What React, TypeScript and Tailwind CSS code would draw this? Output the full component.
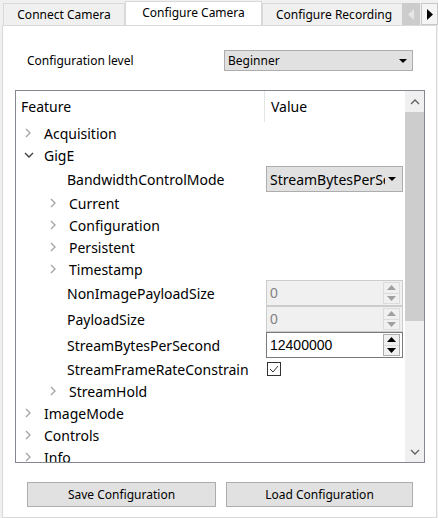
import type { ReactNode } from "react";

const font = "font-['Noto_Sans',sans-serif]";

function Chevron({ open = false }: { open?: boolean }) {
  if (open) {
    return (
      <svg width="10" height="7" viewBox="0 0 10 7" className="shrink-0">
        <polyline points="1,1 5,5 9,1" fill="none" stroke="#404040" strokeWidth="1.4" />
      </svg>
    );
  }
  return (
    <svg width="7" height="10" viewBox="0 0 7 10" className="shrink-0">
      <polyline points="1,1 5,5 1,9" fill="none" stroke="#a6a6a6" strokeWidth="1.4" />
    </svg>
  );
}

function DropArrow() {
  return (
    <svg width="8" height="4" viewBox="0 0 8 4" className="shrink-0">
      <polygon points="0,0 8,0 4,4" fill="#000" />
    </svg>
  );
}

function SpinBox({ value, disabled = false }: { value: string; disabled?: boolean }) {
  const arrow = disabled ? "#a0a0a0" : "#000";
  return (
    <div
      className={`flex h-[26px] w-[137px] items-center border pl-[3px] pr-[2px] ${
        disabled ? "border-[#cccccc] bg-[#f0f0f0] text-[#838383]" : "border-[#7a7a7a] bg-white text-black"
      }`}
    >
      <span className="flex-1 font-['Liberation_Sans',sans-serif] text-[14px]">{value}</span>
      <div
        className={`flex h-[22px] w-[17px] flex-col border ${
          disabled ? "border-[#dcdcdc]" : "border-[#adadad] bg-[#f0f0f0]"
        }`}
      >
        <div className="flex flex-1 items-center justify-center border-b border-[#dcdcdc]">
          <svg width="9" height="5" viewBox="0 0 9 5">
            <polygon points="0,5 9,5 4.5,0" fill={arrow} />
          </svg>
        </div>
        <div className="flex flex-1 items-center justify-center">
          <svg width="9" height="5" viewBox="0 0 9 5">
            <polygon points="0,0 9,0 4.5,5" fill={arrow} />
          </svg>
        </div>
      </div>
    </div>
  );
}

type Row = {
  label: string;
  level: 0 | 1;
  kind: "branch" | "open" | "leaf";
  tall?: boolean;
  value?: ReactNode;
};

const rows: Row[] = [
  { label: "Acquisition", level: 0, kind: "branch" },
  { label: "GigE", level: 0, kind: "open" },
  {
    label: "BandwidthControlMode",
    level: 1,
    kind: "leaf",
    tall: true,
    value: (
      <div className="flex h-[26px] w-[137px] items-center overflow-hidden border border-[#adadad] bg-[#e1e1e1] pl-[3px] pr-[6px]">
        <span className="flex-1 overflow-hidden whitespace-nowrap">StreamBytesPerSecond</span>
        <span className="ml-[3px]">
          <DropArrow />
        </span>
      </div>
    ),
  },
  { label: "Current", level: 1, kind: "branch" },
  { label: "Configuration", level: 1, kind: "branch" },
  { label: "Persistent", level: 1, kind: "branch" },
  { label: "Timestamp", level: 1, kind: "branch" },
  { label: "NonImagePayloadSize", level: 1, kind: "leaf", tall: true, value: <SpinBox value="0" disabled /> },
  { label: "PayloadSize", level: 1, kind: "leaf", tall: true, value: <SpinBox value="0" disabled /> },
  { label: "StreamBytesPerSecond", level: 1, kind: "leaf", tall: true, value: <SpinBox value="12400000" /> },
  {
    label: "StreamFrameRateConstrain",
    level: 1,
    kind: "leaf",
    value: (
      <div className="ml-px flex h-[14px] w-[14px] items-center justify-center border border-[#333333] bg-white">
        <svg width="10" height="8" viewBox="0 0 10 8">
          <polyline points="1,4 4,7 9,1" fill="none" stroke="#333" strokeWidth="1" />
        </svg>
      </div>
    ),
  },
  { label: "StreamHold", level: 1, kind: "branch" },
  { label: "ImageMode", level: 0, kind: "branch" },
  { label: "Controls", level: 0, kind: "branch" },
  { label: "Info", level: 0, kind: "branch" },
];

function TreeRow({ row }: { row: Row }) {
  const chevronPad = row.level === 0 ? "pl-[9px]" : "pl-[34px]";
  return (
    <div className={`flex shrink-0 items-center ${row.tall ? "h-[26px]" : "h-[22px]"}`}>
      <div className="flex w-[249px] shrink-0 items-center whitespace-nowrap">
        {row.kind === "leaf" ? (
          <span className="pl-[51px]">{row.label}</span>
        ) : (
          <div className={`flex items-center ${chevronPad}`}>
            <span className={`flex w-[10px] items-center ${row.kind === "open" ? "-ml-[1px]" : ""}`}>
              <Chevron open={row.kind === "open"} />
            </span>
            <span className={row.kind === "open" ? "pl-[10px]" : "pl-[9px]"}>{row.label}</span>
          </div>
        )}
      </div>
      <div className="flex items-center pl-px">{row.value}</div>
    </div>
  );
}

function ScrollBar() {
  return (
    <div className="flex w-[19px] shrink-0 flex-col bg-[#f0f0f0]">
      <div className="flex h-[21px] items-center justify-center">
        <svg width="10" height="6" viewBox="0 0 10 6">
          <polyline points="1,5 5,1 9,5" fill="none" stroke="#606060" strokeWidth="1.3" />
        </svg>
      </div>
      <div className="h-[209px] bg-[#cdcdcd]" />
      <div className="flex-1" />
      <div className="flex h-[21px] items-center justify-center">
        <svg width="10" height="6" viewBox="0 0 10 6">
          <polyline points="1,1 5,5 9,1" fill="none" stroke="#606060" strokeWidth="1.3" />
        </svg>
      </div>
    </div>
  );
}

export default function App() {
  return (
    <div className={`h-[518px] w-[438px] overflow-hidden bg-[#f0f0f0] text-[14px] text-black ${font}`}>
      <div className="flex h-[25px] items-end text-[12px]">
        <div className="flex flex-1 items-end overflow-hidden pl-[3px]">
          <div className="flex h-[22px] w-[122px] shrink-0 items-center justify-center border border-b-0 border-[#d9d9d9] bg-[#f0f0f0]">
            Connect Camera
          </div>
          <div className="relative z-10 -mb-px flex h-[25px] w-[137px] shrink-0 items-center justify-center border border-b-0 border-[#d9d9d9] bg-white pb-[2px]">
            Configure Camera
          </div>
          <div className="flex h-[22px] w-[150px] shrink-0 items-center border border-b-0 border-[#d9d9d9] bg-[#f0f0f0] pl-[13px] whitespace-nowrap">
            Configure Recording
          </div>
        </div>
        <div className="flex h-[22px] shrink-0">
          <div className="flex w-[18px] items-center justify-center bg-[#cccccc]">
            <svg width="6" height="11" viewBox="0 0 6 11">
              <polygon points="6,0 6,11 0,5.5" fill="#e6e6e6" />
            </svg>
          </div>
          <div className="ml-px flex w-[17px] items-center justify-center border border-[#c8c8c8] bg-[#f4f4f4]">
            <svg width="6" height="11" viewBox="0 0 6 11">
              <polygon points="0,0 0,11 6,5.5" fill="#000" />
            </svg>
          </div>
        </div>
      </div>

      <div className="ml-[2px] flex h-[493px] w-[435px] flex-col border border-[#d9d9d9] bg-white">
        <div className="mt-[24px] flex h-[21px] items-center text-[12px]">
          <span className="w-[221px] pl-[24px]">Configuration level</span>
          <div className="flex h-[21px] w-[189px] items-center border border-[#adadad] bg-[#e1e1e1] pl-[3px] pr-[5px]">
            <span className="flex-1">Beginner</span>
            <DropArrow />
          </div>
        </div>

        <div className="ml-[12px] mt-[19px] flex h-[373px] w-[410px] border border-[#828790] bg-white">
          <div className="flex min-w-0 flex-1 flex-col overflow-hidden">
            <div className="flex h-[31px] shrink-0 items-center">
              <div className="flex h-full w-[249px] items-center border-r border-[#e5e5e5] pl-[5px]">Feature</div>
              <div className="pl-[6px]">Value</div>
            </div>
            {rows.map((row) => (
              <TreeRow key={row.label} row={row} />
            ))}
          </div>
          <ScrollBar />
        </div>

        <div className="mt-[19px] flex gap-[10px] pl-[24px] text-[12px]">
          <button className="flex h-[25px] w-[189px] items-center justify-center border border-[#adadad] bg-[#e1e1e1]">
            Save Configuration
          </button>
          <button className="flex h-[25px] w-[187px] items-center justify-center border border-[#adadad] bg-[#e1e1e1]">
            Load Configuration
          </button>
        </div>
      </div>
    </div>
  );
}
